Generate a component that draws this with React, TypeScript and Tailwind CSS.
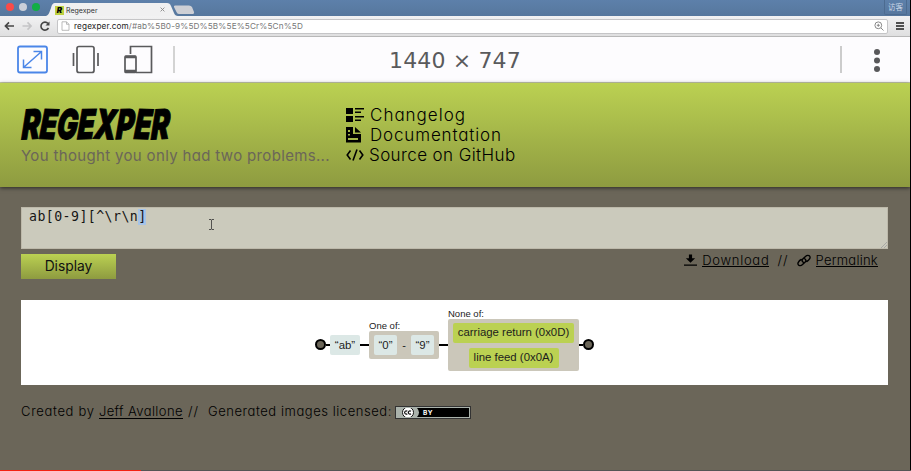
import React from "react";

const gothic = "font-['Inter','Liberation_Sans',sans-serif] font-light [font-feature-settings:'cv11','ss03'] whitespace-nowrap";

const logo: [string, string][] = [
  ["R", "-rotate-2"],
  ["E", "rotate-1"],
  ["G", "rotate-1"],
  ["E", "-rotate-1"],
  ["X", "rotate-2"],
  ["P", "-rotate-1"],
  ["E", "rotate-1"],
  ["R", "-rotate-2"],
];

function TitleBar() {
  return (
    <div className="relative flex h-4 bg-gradient-to-b from-[#5d80aa] to-[#56779d]">
      <div className="flex gap-[5px] pt-[3px] pl-[5.500px]">
        <span className="size-2 rounded-full bg-[#fb4b48]" />
        <span className="size-2 rounded-full bg-[#ccd0d9]" />
        <span className="size-2 rounded-full bg-[#12ae45]" />
      </div>
      <svg className="absolute left-[46px] top-[3px]" width="150" height="13" viewBox="0 0 150 13">
        <path d="M0 13C3 12 3 10 5 5Q6 0 9 0H121Q124 0 125 3L128 10Q129 13 132 13Z" fill="#f0f0f1" />
        <path d="M129 2.500H143Q145 2.500 146 4L148 9Q148.500 11 146 11H133Q131 11 130.500 9L128 4Q127.500 2.500 129 2.500Z" fill="#cdcfd5" />
      </svg>
      <div className="absolute left-[55px] top-[5px] flex h-[10px] w-[110px] items-center text-[7px] text-[#333]">
        <span className="flex h-[9px] w-[9px] items-center justify-center bg-[#bfd141] font-['Inter',sans-serif] text-[8px] font-black italic text-black">R</span>
        <span className="ml-[2px] font-['Inter',sans-serif] leading-none">Regexper</span>
        <svg className="mb-px ml-auto" width="5" height="5" viewBox="0 0 5 5" stroke="#888" strokeWidth="0.9"><path d="M.6.6l3.800 3.800M4.400.6L.6 4.400" /></svg>
      </div>
      <div className="ml-auto mr-[3px] flex h-[15px] w-[23px] items-center justify-center rounded-b-[2px] border border-t-0 border-[#4c6b90] font-['Noto_Sans_CJK_SC',sans-serif] text-[7.500px] text-[#c9d6e6]">访客</div>
    </div>
  );
}

function AddressBar() {
  return (
    <div className="flex h-[21px] items-center border-b border-[#b8b8b8] bg-gradient-to-b from-[#f2f2f3] to-[#dfdfe0] pl-[4px] pr-[6px]">
      <svg width="50" height="14" viewBox="0 0 50 14" fill="none" strokeWidth="1.600">
        <path d="M10 7H1.500M5 3.400L1.400 7L5 10.600" stroke="#454545" />
        <path d="M18.500 7H27M23.500 3.400L27.100 7L23.500 10.600" stroke="#c4c4c6" />
        <path d="M44.500 9A4 4 0 1 1 44 4.500" stroke="#454545" />
        <path d="M45.500 2.500V6.500H41.500Z" fill="#454545" />
      </svg>
      <div className="ml-[3px] flex h-[15px] flex-1 items-center rounded-[2px] border border-[#c5c5c7] bg-white pl-[3px] pr-[3px]">
        <svg width="9" height="10" viewBox="0 0 9 10" fill="#fff" stroke="#aaa" strokeWidth=".8"><path d="M1 .8H5.500L8 3.300V9.300H1ZM5.500.8V3.300H8" /></svg>
        <span className="ml-[4px] pt-px font-['Inter','Liberation_Sans',sans-serif] text-[8.200px] leading-none tracking-[0.13px] text-[#777]">
          <span className="text-[#222]">regexper.com</span>/#ab%5B0-9%5D%5B%5E%5Cr%5Cn%5D
        </span>
        <svg className="ml-auto" width="10" height="10" viewBox="0 0 10 10" fill="none" stroke="#888" strokeWidth="1"><circle cx="4.300" cy="4.300" r="3.400" /><path d="M7 7l2.500 2.500M2.800 4.300h3M4.300 2.800v3" /></svg>
      </div>
      <div className="ml-[8px] flex w-[8px] flex-col gap-px">
        <span className="h-[2px] bg-[#505050]" /><span className="h-[2px] bg-[#505050]" /><span className="h-[2px] bg-[#505050]" />
      </div>
    </div>
  );
}

function DeviceBar() {
  return (
    <div className="flex h-[46px] items-center border-b border-[#c9ccae] bg-[#fdfcfe]">
      <svg width="180" height="45" viewBox="0 0 180 45" fill="none" stroke="#5a5a5c" strokeWidth="1.700">
        <g stroke="#4b86e8" strokeWidth="1.500">
          <rect x="18" y="9.500" width="29" height="26" rx="2" strokeWidth="1.800" />
          <path d="M24 30L41 15M33.500 14.500H41.500V22.500M23.500 22.500V30.500H31.500" />
        </g>
        <rect x="77" y="9.500" width="17" height="26" rx="2" />
        <path d="M73.500 16V29M98 16V29" />
        <path d="M130.500 17V9.500H151.500V35.500H136" />
        <rect x="125" y="19" width="11" height="16.500" rx="1" />
        <path d="M125 20H136M125 34H136" strokeWidth="2.400" />
        <path d="M174 9V36" stroke="#ccc" />
      </svg>
      <span className="ml-[209px] pt-[2px] font-['DejaVu_Sans',sans-serif] text-[22px] leading-none tracking-[0.150px] text-[#5a5a5c] whitespace-nowrap">1440 × 747</span>
      <span className="ml-auto h-[27px] w-[2px] bg-[#ccc]" />
      <svg className="mr-[29px] ml-[31px]" width="8" height="26" viewBox="0 0 8 26" fill="#58585a"><circle cx="4" cy="5" r="3" /><circle cx="4" cy="13.500" r="3" /><circle cx="4" cy="22" r="3" /></svg>
    </div>
  );
}

function Header() {
  return (
    <header className="flex h-[104px] bg-gradient-to-b from-[#bbd152] to-[#8e9b40] pl-[21px] shadow-[0_1px_4px_rgba(0,0,0,.6)]">
      <div className="w-[325px] pt-[20px]">
        <h1 className="ml-px flex h-[42px] w-[148px] origin-left -skew-x-6 scale-x-[.675] items-center font-['Inter',sans-serif] text-[41px] leading-none font-black italic text-black [-webkit-text-stroke:1px_black]">
          {logo.map(([c, tilt], i) => <span key={i} className={`-mr-[0.300px] inline-block ${tilt}`}>{c}</span>)}
        </h1>
        <p className={`${gothic} text-[15px] leading-[22px] text-[#6b6659]`}><span className="font-normal tracking-[0.340px]">You thought you only had two problems...</span></p>
      </div>
      <ul className={`${gothic} pt-[22px] text-[17px] leading-[20px] text-black`}>
        <li className="flex h-5 items-center gap-[6px]">
          <svg width="18" height="16" viewBox="0 0 18 16"><path d="M0 1h7v6H0zM0 9h7v6H0zM9 1h9v1.600H9zM9 4.500h6v1.600H9zM9 9h9v1.600H9zM9 12.500h6v1.600H9z" /></svg>
          <span className="tracking-[1px]">Changelog</span>
        </li>
        <li className="flex h-5 items-center gap-[6px]">
          <svg width="18" height="16" viewBox="0 0 18 16"><path fillRule="evenodd" d="M0 0H7V7H15V15.500H0ZM2 3V5H4V3ZM2 7V8.500H4V7ZM2 11V13H12V11ZM9 0L15 5.500H9Z" /></svg>
          <span className="tracking-[0.850px]">Documentation</span>
        </li>
        <li className="flex h-5 items-center gap-[5px]">
          <svg width="18" height="14" viewBox="0 0 18 14" fill="none" stroke="#000" strokeWidth="1.600"><path d="M4.500 2.500L1.200 7L4.500 11.500M13.500 2.500L16.800 7L13.500 11.500M11 1.500L7 12.500" /></svg>
          <span className="tracking-[0.400px]">Source on GitHub</span>
        </li>
      </ul>
    </header>
  );
}

function Token({ children, className }: { children: React.ReactNode; className: string }) {
  return <span className={`flex items-center justify-center rounded-[2px] pt-px text-[11.400px] whitespace-nowrap text-[#1d1d1d] ${className}`}>{children}</span>;
}

function Diagram() {
  return (
    <div className="flex h-[85px] items-start bg-white pl-[294px] font-['Liberation_Sans',Arial,sans-serif] text-[#222]">
      <span className="mt-[39px] size-[11px] rounded-full border-2 border-black bg-[#6b6659]" />
      <span className="mt-[44px] h-[2px] w-[4px] bg-black" />
      <Token className="mt-[35px] h-[20px] w-[30px] bg-[#dce8e6]">“ab”</Token>
      <span className="mt-[44px] h-[2px] w-[9px] bg-black" />
      <div className="w-[70px] pt-[20px]">
        <div className="h-[11px] text-[9.500px] leading-[11px]">One of:</div>
        <div className="flex h-[28px] items-center justify-between rounded-[2px] bg-[#cbc7ba] px-[5px]">
          <Token className="h-[20px] w-[23px] bg-[#dce8e6]">“0”</Token>
          <span className="text-[11px]">-</span>
          <Token className="h-[20px] w-[23px] bg-[#dce8e6]">“9”</Token>
        </div>
      </div>
      <span className="mt-[44px] h-[2px] w-[9px] bg-black" />
      <div className="w-[131px] pt-[8px]">
        <div className="h-[11px] text-[9.500px] leading-[11px]">None of:</div>
        <div className="flex h-[52px] flex-col items-center justify-center gap-[5px] rounded-[2px] bg-[#cbc7ba]">
          <Token className="h-[20px] w-[121px] bg-[#bbd152]">carriage return (0x0D)</Token>
          <Token className="h-[20px] w-[90px] bg-[#bbd152]">line feed (0x0A)</Token>
        </div>
      </div>
      <span className="mt-[44px] h-[2px] w-[4px] bg-black" />
      <span className="mt-[39px] size-[11px] rounded-full border-2 border-black bg-[#6b6659]" />
    </div>
  );
}

export default function App() {
  return (
    <div className="flex h-[471px] w-[911px] flex-col overflow-hidden bg-[#6b6659]">
      <div className="flex h-[470px] flex-col border-r border-black">
        <TitleBar />
        <AddressBar />
        <DeviceBar />
        <Header />
        <main className="px-[21px] pr-[22px] pt-[20px]">
          <div className="relative flex h-[42px] border border-[#bdb9aa] bg-[#cbcabc] pt-[1px] pl-[7px] font-['DejaVu_Sans_Mono',monospace] text-[13.200px] leading-[16px] text-[#151515]">
            <span className="tracking-[0.460px]">ab[0-9][^\r\n</span>
            <span className="h-[16px] w-[8px] bg-[#a5c3e8]">]</span>
            <svg className="absolute left-[185px] top-[10px]" width="9" height="13" viewBox="0 0 9 13" stroke="#333" fill="none"><path d="M2 1.500H4L4.500 2L5 1.500H7M4.500 2V11M2 11.500H4L4.500 11L5 11.500H7" strokeWidth=".8" /></svg>
            <svg className="absolute right-0 bottom-0" width="6" height="6" viewBox="0 0 6 6" stroke="#999"><path d="M0 6L6 0M3 6L6 3" strokeWidth=".7" /></svg>
          </div>
          <div className="flex h-[51px] items-start justify-between pt-[5px]">
            <button className="h-[25px] w-[95px] bg-gradient-to-b from-[#bbd152] to-[#8e9b40] font-['Inter',sans-serif] text-[13.800px] text-[#111]">Display</button>
            <div className={`${gothic} flex items-start pr-[10px] text-[13px] leading-[12px] text-black`}>
              <svg className="mr-[5px]" width="13" height="13" viewBox="0 0 14 13"><path d="M5.300 0H8.700V4H12L7 9L2 4H5.300ZM0 10.700H14V12.200H0Z" /></svg>
              <span className="border-b border-black tracking-[0.730px]">Download</span>
              <span className="mx-[8px] tracking-[1px]">//</span>
              <svg className="mr-[5px]" width="14" height="13" viewBox="0 0 14 13" fill="none" stroke="#000" strokeWidth="1.400" strokeLinecap="round"><path d="M6.200 8.200C4.800 7.500 4.900 5.900 6 4.800L8.500 2.400C10.800 .2 14.200 2 12.700 4.700C12 6 10.800 7 9.800 7.500M7.800 4.800C9.200 5.500 9.100 7.100 8 8.200L5.500 10.600C3.200 12.800 -.2 11 1.300 8.300C2 7 3.200 6 4.200 5.500" /></svg>
              <span className="border-b border-black tracking-[0.250px]">Permalink</span>
            </div>
          </div>
          <Diagram />
          <footer className={`${gothic} flex items-start pt-[20px] text-[13px] leading-[13px] text-black`}>
            <span className="tracking-[0.670px]">Created by&nbsp;</span>
            <span className="border-b border-black tracking-[0.400px]">Jeff Avallone</span>
            <span className="ml-[5px] tracking-[1px]">//</span>
            <span className="ml-[9px] tracking-[0.550px]">Generated images licensed:</span>
            <span className="ml-[3px] mt-[1px] flex h-[13px] w-[76px] items-center border border-[#333] bg-[#aab2ab] p-px">
              <span className="flex h-[9px] w-full items-center bg-black">
                <svg width="23" height="9" viewBox="0 0 23 9"><path d="M0 0H20Q24 4.500 20 9H0Z" fill="#aab2ab" /><circle cx="11" cy="4.500" r="5.500" fill="#fff" stroke="#111" /><path d="M10.300 3.300A1.600 1.600 0 1 0 10.300 5.700M14 3.300A1.600 1.600 0 1 0 14 5.700" fill="none" stroke="#111" strokeWidth="1.200" /></svg>
                <span className="ml-[3px] pt-px font-['Inter',sans-serif] text-[6.500px] leading-none font-bold tracking-[.5px] text-white">BY</span>
              </span>
            </span>
          </footer>
        </main>
      </div>
      <div className="h-px w-full bg-[#555]"><div className="h-px w-[141px] bg-[#f22112]" /></div>
    </div>
  );
}
